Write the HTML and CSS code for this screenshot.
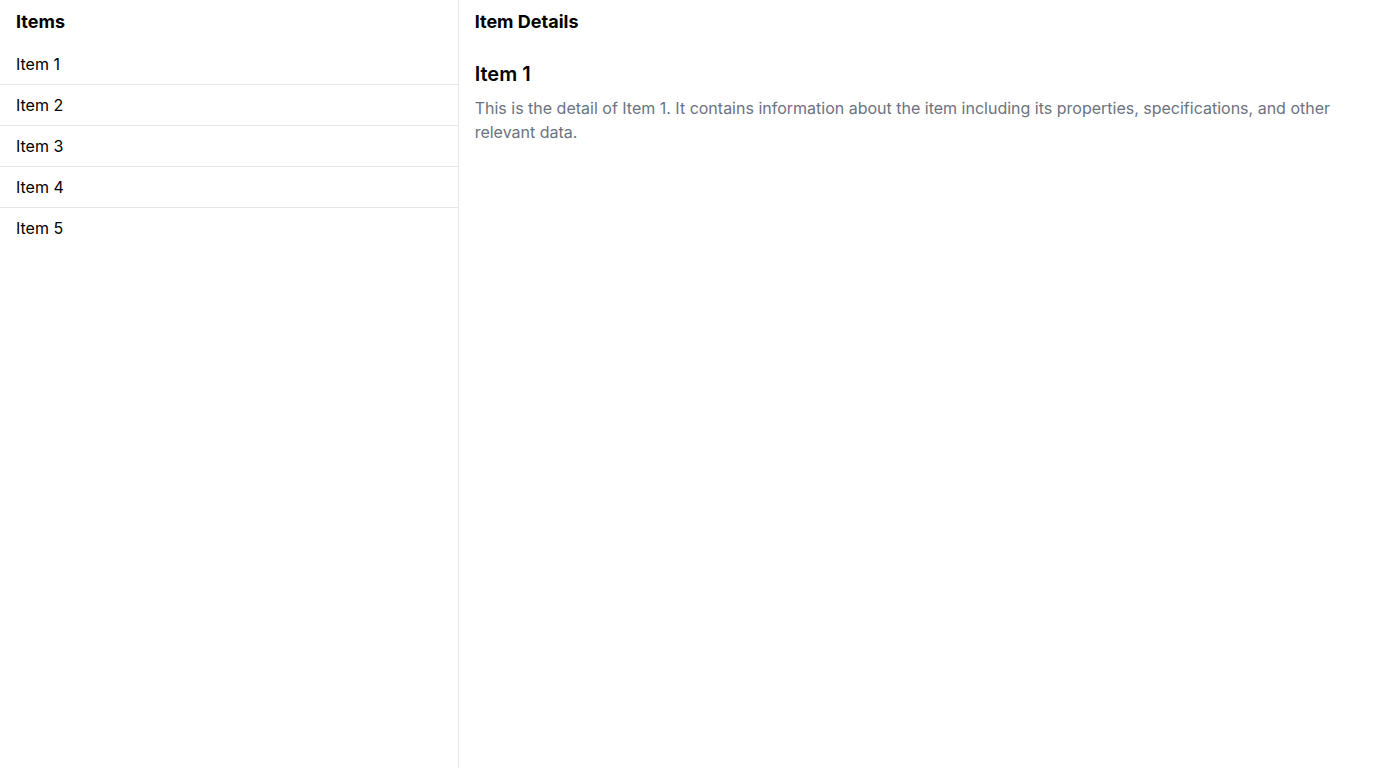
FILE: index.html
```html
<!DOCTYPE html>
<html>
<head>
<meta charset="utf-8">
<link rel="stylesheet" href="styles.css">
</head>
<body>
<div class="app">
  <aside class="list-pane">
    <h2 class="pane-title">Items</h2>
    <ul class="item-list">
      <li class="item">Item 1</li>
      <li class="item">Item 2</li>
      <li class="item">Item 3</li>
      <li class="item">Item 4</li>
      <li class="item">Item 5</li>
    </ul>
  </aside>
  <main class="detail-pane">
    <h2 class="pane-title">Item Details</h2>
    <div class="detail-body">
      <h3 class="detail-title">Item 1</h3>
      <p class="detail-text">This is the detail of Item 1. It contains information about the item including its properties, specifications, and other relevant data.</p>
    </div>
  </main>
</div>
</body>
</html>
```
FILE: styles.css
```css
html, body {
  margin: 0;
  padding: 0;
  height: 100%;
}
body {
  font-family: Inter, "Liberation Sans", sans-serif;
  color: #000;
  background: #fff;
}
.app {
  display: flex;
  height: 100vh;
}
.list-pane {
  width: 33.3333%;
  border-right: 1px solid #e5e7eb;
  box-sizing: border-box;
  flex-shrink: 0;
}
.detail-pane {
  flex: 1;
}
.pane-title {
  margin: 0;
  padding: 8px 16px;
  font-size: 18px;
  line-height: 28px;
  font-weight: 700;
}
.item-list {
  list-style: none;
  margin: 0;
  padding: 0;
}
.item {
  padding: 8px 16px;
  font-size: 16px;
  line-height: 24px;
  border-bottom: 1px solid #e5e7eb;
}
.item:last-child {
  border-bottom: none;
}
.detail-body {
  padding: 16px;
}
.detail-title {
  margin: 0;
  font-size: 20px;
  line-height: 28px;
  font-weight: 600;
}
.detail-text {
  margin: 8px 0 0;
  font-size: 16px;
  line-height: 24px;
  color: #6b7280;
}
```
